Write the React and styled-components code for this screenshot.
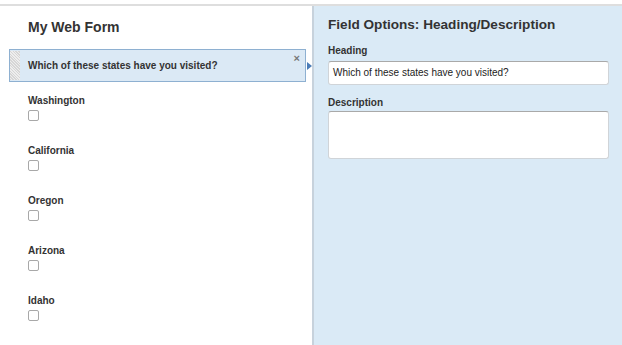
import React from "react";
import styled, { createGlobalStyle } from "styled-components";

const GlobalStyle = createGlobalStyle`
  html, body {
    margin: 0;
    padding: 0;
    background: #fff;
  }
  body {
    font-family: "Liberation Sans", Arial, sans-serif;
    color: #333;
  }
`;

const Page = styled.div`
  width: 622px;
  height: 345px;
  padding-top: 4px;
  box-sizing: border-box;
  overflow: hidden;
`;

const Frame = styled.div`
  display: flex;
  height: 341px;
  border-top: 2px solid #dedede;
`;

const FormPanel = styled.div`
  width: 312px;
  flex-shrink: 0;
  background: #fff;
`;

const PanelTitle = styled.h2`
  margin: ${(p) => p.$top}px 0 0 ${(p) => p.$left || 0}px;
  font-size: ${(p) => p.$size || 14}px;
  line-height: 20px;
  font-weight: bold;
  color: #333;
`;

const SelectedField = styled.div`
  position: relative;
  margin: 12px 0 0 9px;
  width: 297px;
  height: 33px;
  box-sizing: border-box;
  border: 1px solid #8eb0d1;
  background: #dbe9f5;
  display: flex;
  align-items: center;
`;

const Grip = styled.div`
  width: 10px;
  align-self: stretch;
  margin: 1px 0;
  background: repeating-linear-gradient(
    45deg,
    #d6d6d6 0px,
    #d6d6d6 1px,
    #eeeeee 1px,
    #eeeeee 2px
  );
`;

const FieldText = styled.span`
  margin-left: 8px;
  font-size: 10px;
  font-weight: bold;
  color: #333;
`;

const Remove = styled.span`
  position: absolute;
  top: 2px;
  right: 5px;
  font-size: 11px;
  font-weight: bold;
  line-height: 12px;
  color: #777;
`;

const Pointer = styled.span`
  position: absolute;
  right: -7px;
  top: 50%;
  margin-top: -4px;
  width: 0;
  height: 0;
  border-top: 4px solid transparent;
  border-bottom: 4px solid transparent;
  border-left: 5px solid #4b7db8;
`;

const FieldList = styled.div`
  display: flex;
  flex-direction: column;
  padding: 12px 0 0 28px;
`;

const StateItem = styled.div`
  height: 50px;
`;

const Label = styled.div`
  margin-top: ${(p) => p.$top || 0}px;
  font-size: 10px;
  line-height: 14px;
  font-weight: bold;
  color: #333;
`;

const Check = styled.div`
  margin-top: 2px;
  width: 11px;
  height: 11px;
  box-sizing: border-box;
  border: 1px solid #a8a8a8;
  border-radius: 2px;
  background: #fff;
`;

const OptionsPanel = styled.div`
  flex: 1;
  background: #daeaf6;
  border-left: 2px solid #c7d2dc;
  padding: 0 13px 0 14px;
`;

const TextBox = styled.div`
  margin-top: ${(p) => p.$top}px;
  height: ${(p) => p.$height}px;
  box-sizing: border-box;
  background: #fff;
  border: 1px solid #d0d4d8;
  border-top-color: #a9a9a9;
  border-radius: 3px;
  padding: 0 4px;
  font-size: 10px;
  line-height: 22px;
  color: #222;
`;

const states = ["Washington", "California", "Oregon", "Arizona", "Idaho"];

export default function App() {
  return (
    <Page>
      <GlobalStyle />
      <Frame>
        <FormPanel>
          <PanelTitle $top={11} $left={28}>My Web Form</PanelTitle>
          <SelectedField>
            <Grip />
            <FieldText>Which of these states have you visited?</FieldText>
            <Remove>×</Remove>
            <Pointer />
          </SelectedField>
          <FieldList>
            {states.map((s) => (
              <StateItem key={s}>
                <Label>{s}</Label>
                <Check />
              </StateItem>
            ))}
          </FieldList>
        </FormPanel>
        <OptionsPanel>
          <PanelTitle as="h3" $top={9} $size={13.6}>
            Field Options: Heading/Description
          </PanelTitle>
          <Label $top={9}>Heading</Label>
          <TextBox $top={3} $height={24}>
            Which of these states have you visited?
          </TextBox>
          <Label $top={11}>Description</Label>
          <TextBox $top={1} $height={48} />
        </OptionsPanel>
      </Frame>
    </Page>
  );
}
